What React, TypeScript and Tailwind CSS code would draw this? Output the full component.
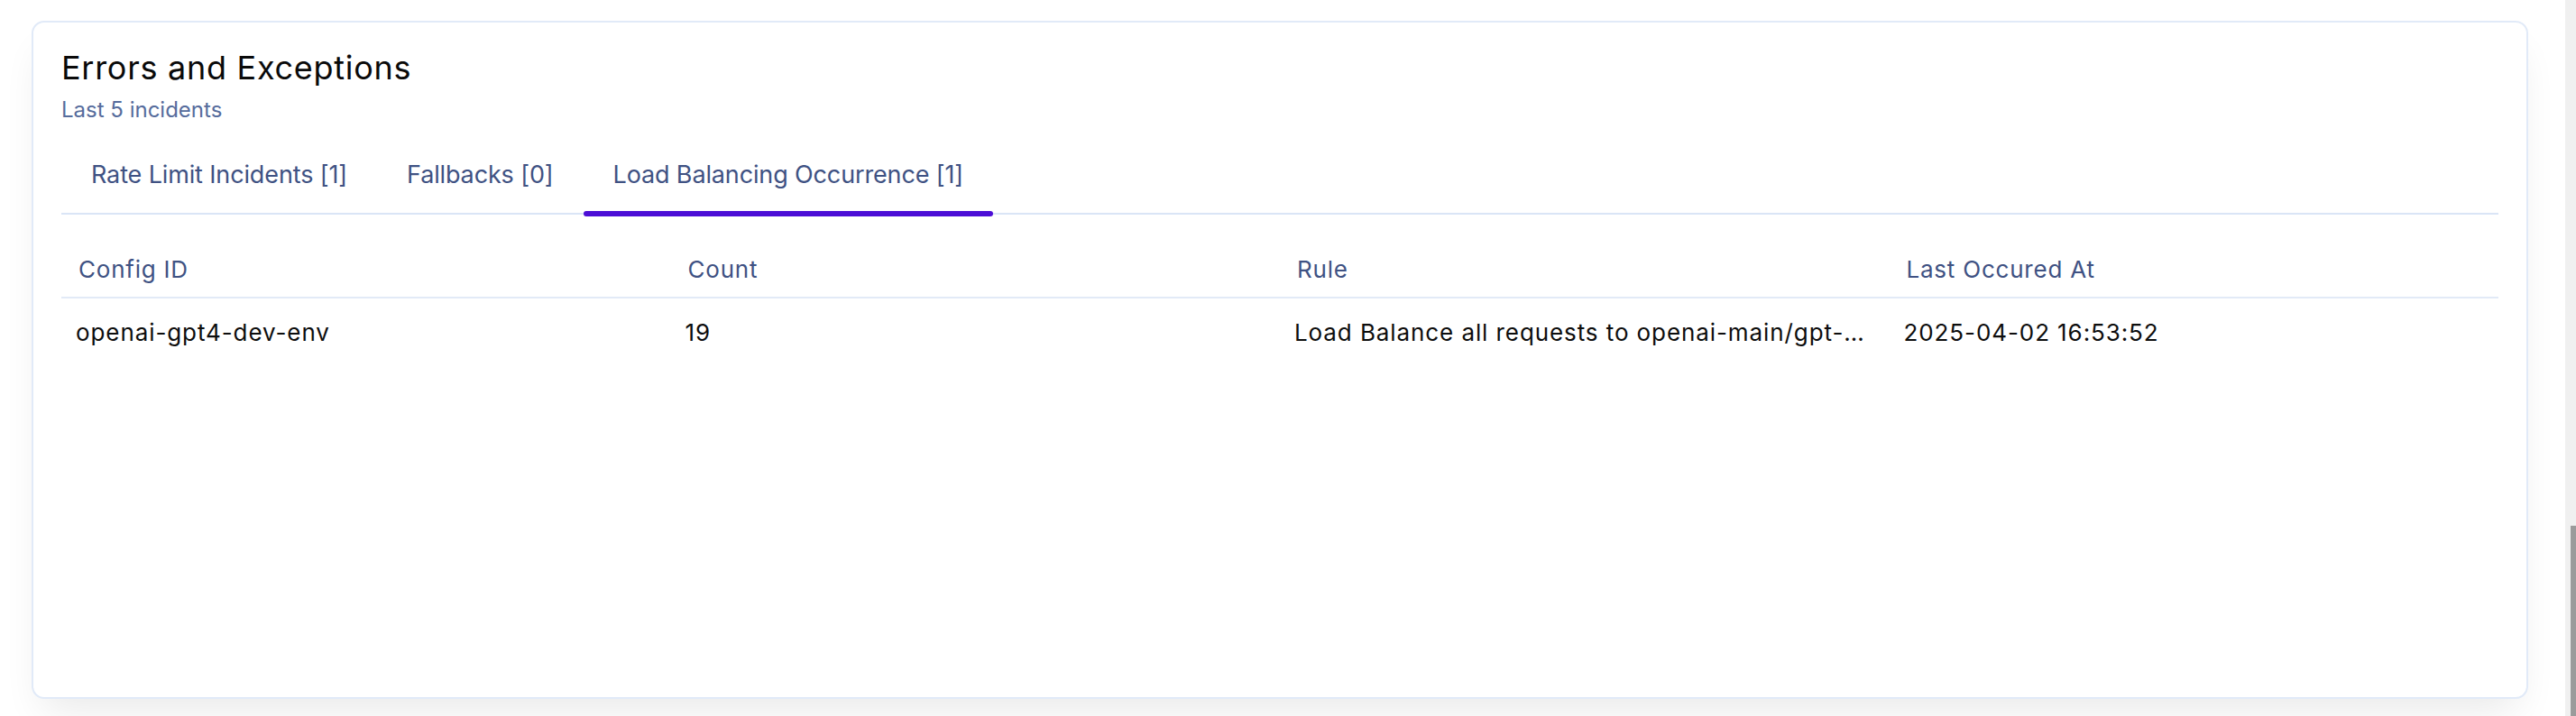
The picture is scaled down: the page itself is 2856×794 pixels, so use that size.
// ERRORS AND EXCEPTIONS CARD
// Sections: Header · Tabs · Incidents table

import { useState } from 'react'

// ─── Data ────────────────────────────────────────────────────────────────────

const TABS = [
  { id: 'rate', label: 'Rate Limit Incidents [1]' },
  { id: 'fallbacks', label: 'Fallbacks [0]' },
  { id: 'lb', label: 'Load Balancing Occurrence [1]' },
]

const COLUMNS = ['Config ID', 'Count', 'Rule', 'Last Occured At']

const ROWS = [
  {
    configId: 'openai-gpt4-dev-env',
    count: 19,
    rule: 'Load Balance all requests to openai-main/gpt-4 and openai-backup/gpt-4',
    lastAt: '2025-04-02 16:53:52',
  },
]

// ─── Tabs ────────────────────────────────────────────────────────────────────

function Tabs({ active, onChange }: { active: string; onChange: (id: string) => void }) {
  return (
    <div className="mt-[38px] flex border-b-2 border-[#dae5f6]">
      {TABS.map(t => (
        <button
          key={t.id}
          onClick={() => onChange(t.id)}
          className="relative px-[33px] pb-[24px] text-[27px] leading-[36px] tracking-[-0.005em] text-[#3f5283]"
        >
          {t.label}
          {active === t.id && (
            <span className="absolute left-0 right-0 bottom-[-4px] h-[6px] rounded-full bg-[#4c0ed6]" />
          )}
        </button>
      ))}
    </div>
  )
}

// ─── Table ───────────────────────────────────────────────────────────────────

function IncidentsTable() {
  return (
    <div>
      <div className="grid grid-cols-4 border-b-2 border-[#e2eaf7] pt-[45px] pb-[14px]">
        {COLUMNS.map(c => (
          <div key={c} className="px-[19px] text-[26px] leading-[32px] tracking-[0.03em] text-[#3f5283]">
            {c}
          </div>
        ))}
      </div>
      {ROWS.map(r => (
        <div
          key={r.configId}
          className="grid grid-cols-4 pt-[22px] text-[26px] leading-[32px] tracking-[0.035em] text-[#0d0d0d]"
        >
          <div className="min-w-0 truncate px-4">{r.configId}</div>
          <div className="min-w-0 px-4">{r.count}</div>
          <div className="min-w-0 truncate pl-4 pr-[22px]">{r.rule}</div>
          <div className="min-w-0 truncate px-4">{r.lastAt}</div>
        </div>
      ))}
    </div>
  )
}

// ─── Page ────────────────────────────────────────────────────────────────────

export default function App() {
  const [tab, setTab] = useState('lb')

  return (
    <div className="flex min-h-screen bg-white font-['Inter','Noto_Sans',sans-serif]">
      <div className="flex-1 pl-[35px] pr-[41px] pt-[23px]">
        <div className="h-[752px] rounded-[14px] border-2 border-[#e1eaf8] bg-white px-[31px] pt-[29px] shadow-[0_24px_44px_-12px_rgba(0,0,0,0.09)]">
          <h2 className="text-[36px] leading-[42px] tracking-[0.02em] text-[#0a0a0a]">Errors and Exceptions</h2>
          <p className="mt-[10px] text-[24px] leading-[32px] text-[#566c9c]">Last 5 incidents</p>
          <Tabs active={tab} onChange={setTab} />
          <IncidentsTable />
        </div>
      </div>

      {/* scrollbar */}
      <div className="flex w-[12px] flex-col items-end justify-end bg-[#f0f0f0]">
        <div className="h-[211px] w-[6px] bg-[#9b9b9b]" />
      </div>
    </div>
  )
}
